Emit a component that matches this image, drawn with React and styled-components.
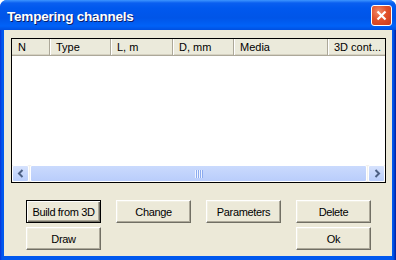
import styled, { createGlobalStyle } from "styled-components";

const GlobalStyle = createGlobalStyle`
  html, body {
    margin: 0;
    padding: 0;
    background: #ffffff;
  }
`;

const Window = styled.div`
  width: 396px;
  height: 260px;
  box-sizing: border-box;
  display: flex;
  flex-direction: column;
  background: linear-gradient(90deg, #0831d9 0px, #0058ee 2px, #0058ee 393px, #001ea0 396px);
  border-radius: 7px 7px 0 0;
  overflow: hidden;
  font-family: "Liberation Sans", Arial, sans-serif;
`;

const TitleBar = styled.div`
  height: 30px;
  flex: none;
  display: flex;
  align-items: center;
  justify-content: space-between;
  padding: 0 4px 0 7px;
  background: linear-gradient(
    180deg,
    #3d95ff 0px,
    #0a5ff0 3px,
    #0058ee 8px,
    #0055e8 18px,
    #0062f8 26px,
    #0050e0 30px
  );
`;

const Title = styled.span`
  color: #ffffff;
  font-weight: bold;
  font-size: 13.5px;
  letter-spacing: -0.2px;
  text-shadow: 1px 1px 0 #0a1e6a;
  padding-top: 2px;
`;

const CloseButton = styled.div`
  width: 19px;
  height: 19px;
  border: 1px solid #ffffff;
  border-radius: 3px;
  background: radial-gradient(circle at 35% 30%, #f08a6a 0%, #e2512a 45%, #c8391c 100%);
  display: flex;
  align-items: center;
  justify-content: center;
  margin-top: 1px;
`;

const Client = styled.div`
  flex: 1;
  margin: 0 4px 4px 4px;
  background: #ece9d8;
  padding: 8px 6px 0 7px;
  display: flex;
  flex-direction: column;
`;

const ListView = styled.div`
  height: 145px;
  box-sizing: border-box;
  border: 1px solid #000000;
  background: #ffffff;
  display: flex;
  flex-direction: column;
  overflow: hidden;
`;

const Header = styled.div`
  height: 16px;
  flex: none;
  display: flex;
  background: #ebeadb;
  border-bottom: 1px solid #aca899;
  box-shadow: inset 0 -1px 0 #d6d2c2;
  overflow: hidden;
`;

const HeaderCell = styled.div`
  width: ${(p) => p.$w}px;
  flex: none;
  box-sizing: border-box;
  padding: 2px 0 0 6px;
  font-size: 11px;
  color: #000000;
  white-space: nowrap;
  overflow: hidden;
  border-right: ${(p) => (p.$last ? "none" : "1px solid #aca899")};
  box-shadow: ${(p) => (p.$last ? "none" : "1px 0 0 #ffffff")};
`;

const ListBody = styled.div`
  flex: 1;
`;

const ScrollBar = styled.div`
  height: 17px;
  flex: none;
  display: flex;
  background: #f3f1ec;
`;

const ArrowButton = styled.div`
  width: 15px;
  height: 15px;
  flex: none;
  border: 1px solid #ffffff;
  border-radius: 2px;
  background: linear-gradient(180deg, #d6e2fd, #b8cdfb);
  display: flex;
  align-items: center;
  justify-content: center;
`;

const Thumb = styled.div`
  flex: 1;
  margin: 0 1px;
  border: 1px solid #ffffff;
  border-radius: 2px;
  background: linear-gradient(180deg, #cadafd, #b9cdfb);
  display: flex;
  align-items: center;
  justify-content: center;
`;

const Grip = styled.div`
  width: 8px;
  height: 8px;
  background: repeating-linear-gradient(90deg, #eef3ff 0 1px, #8cabef 1px 2px);
`;

const ButtonGrid = styled.div`
  display: grid;
  grid-template-columns: repeat(4, 75px);
  grid-auto-rows: 23px;
  column-gap: 15px;
  row-gap: 4px;
  margin-top: 17px;
  padding-left: 15px;
`;

const Button = styled.div`
  grid-column: ${(p) => p.$col};
  box-sizing: border-box;
  display: flex;
  align-items: center;
  justify-content: center;
  background: #ece9d8;
  font-size: 11px;
  letter-spacing: -0.35px;
  color: #000000;
  border: 1px solid;
  border-color: ${(p) => (p.$default ? "#000000" : "#ffffff #716f64 #716f64 #ffffff")};
  box-shadow: ${(p) =>
    p.$default
      ? "inset 1px 1px 0 #ffffff, inset -1px -1px 0 #716f64, inset -2px -2px 0 #aca899"
      : "inset -1px -1px 0 #aca899, inset 1px 1px 0 #f1efe2"};
`;

const columns = [
  { label: "N", w: 38 },
  { label: "Type", w: 61 },
  { label: "L, m", w: 62 },
  { label: "D, mm", w: 61 },
  { label: "Media", w: 94 },
  { label: "3D cont...", w: 60, last: true },
];

const Chevron = ({ dir }) => (
  <svg width="8" height="9" viewBox="0 0 8 9">
    <path
      d={dir === "left" ? "M5.5 1 L2 4.5 L5.5 8" : "M2.5 1 L6 4.5 L2.5 8"}
      fill="none"
      stroke="#4d6185"
      strokeWidth="2"
    />
  </svg>
);

const App = () => {
  return (
    <Window>
      <GlobalStyle />
      <TitleBar>
        <Title>Tempering channels</Title>
        <CloseButton>
          <svg width="11" height="11" viewBox="0 0 11 11">
            <path d="M1.5 1.5 L9.5 9.5 M9.5 1.5 L1.5 9.5" stroke="#ffffff" strokeWidth="2.2" />
          </svg>
        </CloseButton>
      </TitleBar>
      <Client>
        <ListView>
          <Header>
            {columns.map((c) => (
              <HeaderCell key={c.label} $w={c.w} $last={c.last}>
                {c.label}
              </HeaderCell>
            ))}
          </Header>
          <ListBody />
          <ScrollBar>
            <ArrowButton>
              <Chevron dir="left" />
            </ArrowButton>
            <Thumb>
              <Grip />
            </Thumb>
            <ArrowButton>
              <Chevron dir="right" />
            </ArrowButton>
          </ScrollBar>
        </ListView>
        <ButtonGrid>
          <Button $col={1} $default>Build from 3D</Button>
          <Button $col={2}>Change</Button>
          <Button $col={3}>Parameters</Button>
          <Button $col={4}>Delete</Button>
          <Button $col={1}>Draw</Button>
          <Button $col={4}>Ok</Button>
        </ButtonGrid>
      </Client>
    </Window>
  );
};

export default App;
